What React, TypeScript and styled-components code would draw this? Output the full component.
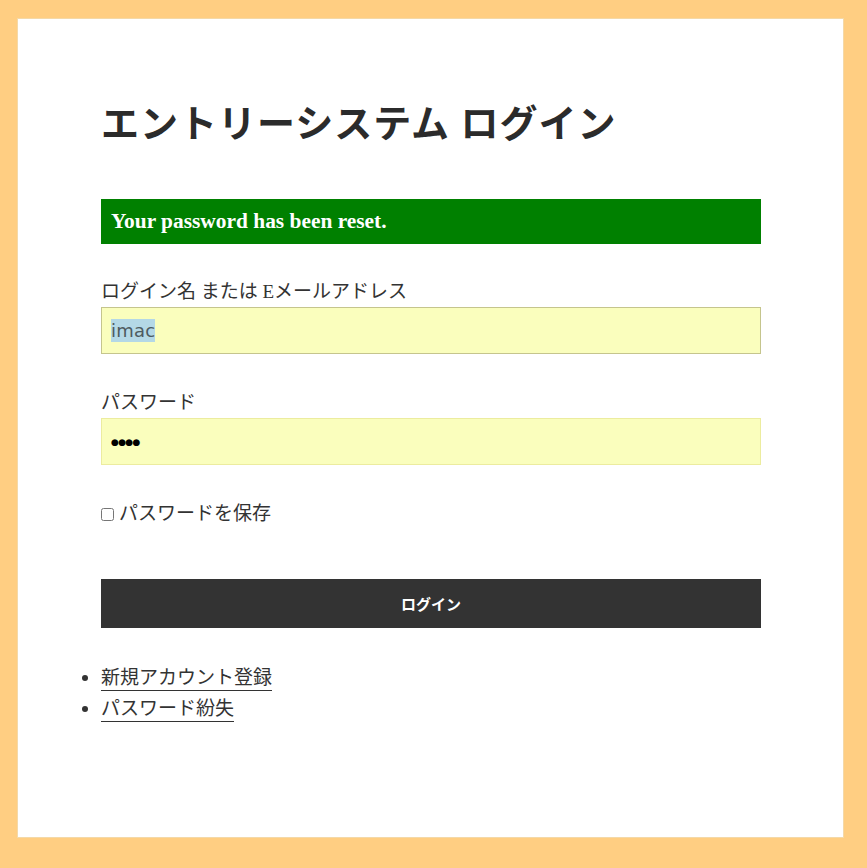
import styled, { createGlobalStyle } from 'styled-components'

const GlobalStyle = createGlobalStyle`
  html, body {
    margin: 0;
    padding: 0;
    background: #ffce82;
  }
  body {
    font-family: 'Liberation Serif', 'Noto Sans CJK JP', serif;
    color: #333;
  }
`

const Page = styled.div`
  padding: 19px 24px 31px 18px;
`

const Card = styled.main`
  box-sizing: border-box;
  height: 818px;
  background: #fff;
  box-shadow: 0 0 0 1px #f4d9a8;
  padding: 82px 82px 0 83px;
`

const Title = styled.h1`
  margin: 0 0 52px 0;
  font-size: 38px;
  line-height: 46px;
  font-weight: bold;
  letter-spacing: 1px;
  color: #2b2b2b;
`

const Notice = styled.div`
  background: #008000;
  color: #fff;
  font-weight: bold;
  font-size: 21.4px;
  line-height: 21px;
  padding: 12px 10px;
  margin-bottom: 34px;
`

const Form = styled.form`
  display: flex;
  flex-direction: column;
`

const Group = styled.div<{ $gap?: number }>`
  display: flex;
  flex-direction: column;
  margin-bottom: ${(p) => p.$gap ?? 35}px;
`

const Label = styled.label`
  font-size: 19px;
  line-height: 28px;
  margin-bottom: 1px;
`

const Field = styled.div<{ $focused?: boolean }>`
  box-sizing: border-box;
  height: 47px;
  background: #fafebd;
  border: 1px solid ${(p) => (p.$focused ? '#c5c58d' : '#ecec9f')};
  padding: 0 9px;
  display: flex;
  align-items: center;
`

const Selected = styled.span`
  background: #b4d8e6;
  color: #4d5a60;
  font-family: 'DejaVu Sans', sans-serif;
  font-size: 18px;
  line-height: 23px;
  letter-spacing: 0.2px;
`

const Dots = styled.span`
  color: #000;
  font-family: 'DejaVu Sans', sans-serif;
  font-size: 9px;
  letter-spacing: -0.7px;
`

const CheckRow = styled.label`
  display: flex;
  align-items: center;
  font-size: 19px;
  line-height: 28px;
  margin-bottom: 51px;
`

const Check = styled.input`
  width: 13px;
  height: 13px;
  margin: 0 5px 0 0;
`

const Button = styled.button`
  height: 49px;
  border: none;
  background: #333;
  color: #fff;
  font-family: 'Noto Sans CJK JP', sans-serif;
  font-weight: bold;
  font-size: 15px;
  cursor: pointer;
`

const Links = styled.ul`
  margin: 34px 0 0 0;
  padding: 0;
  list-style: disc outside;
`

const Item = styled.li`
  font-size: 19px;
  line-height: 31px;
  &::marker {
    font-size: 20px;
  }
`

const Link = styled.a`
  color: #333;
  text-decoration: none;
  border-bottom: 1px solid #333;
  padding-bottom: 2px;
`

export default function App() {
  return (
    <>
      <GlobalStyle />
      <Page>
        <Card>
          <Title>エントリーシステム ログイン</Title>
          <Notice>Your password has been reset.</Notice>
          <Form onSubmit={(e) => e.preventDefault()}>
            <Group>
              <Label>ログイン名 または Eメールアドレス</Label>
              <Field $focused>
                <Selected>imac</Selected>
              </Field>
            </Group>
            <Group>
              <Label>パスワード</Label>
              <Field>
                <Dots>●●●●</Dots>
              </Field>
            </Group>
            <CheckRow>
              <Check type="checkbox" />
              パスワードを保存
            </CheckRow>
            <Button type="submit">ログイン</Button>
          </Form>
          <Links>
            <Item>
              <Link href="#">新規アカウント登録</Link>
            </Item>
            <Item>
              <Link href="#">パスワード紛失</Link>
            </Item>
          </Links>
        </Card>
      </Page>
    </>
  )
}
